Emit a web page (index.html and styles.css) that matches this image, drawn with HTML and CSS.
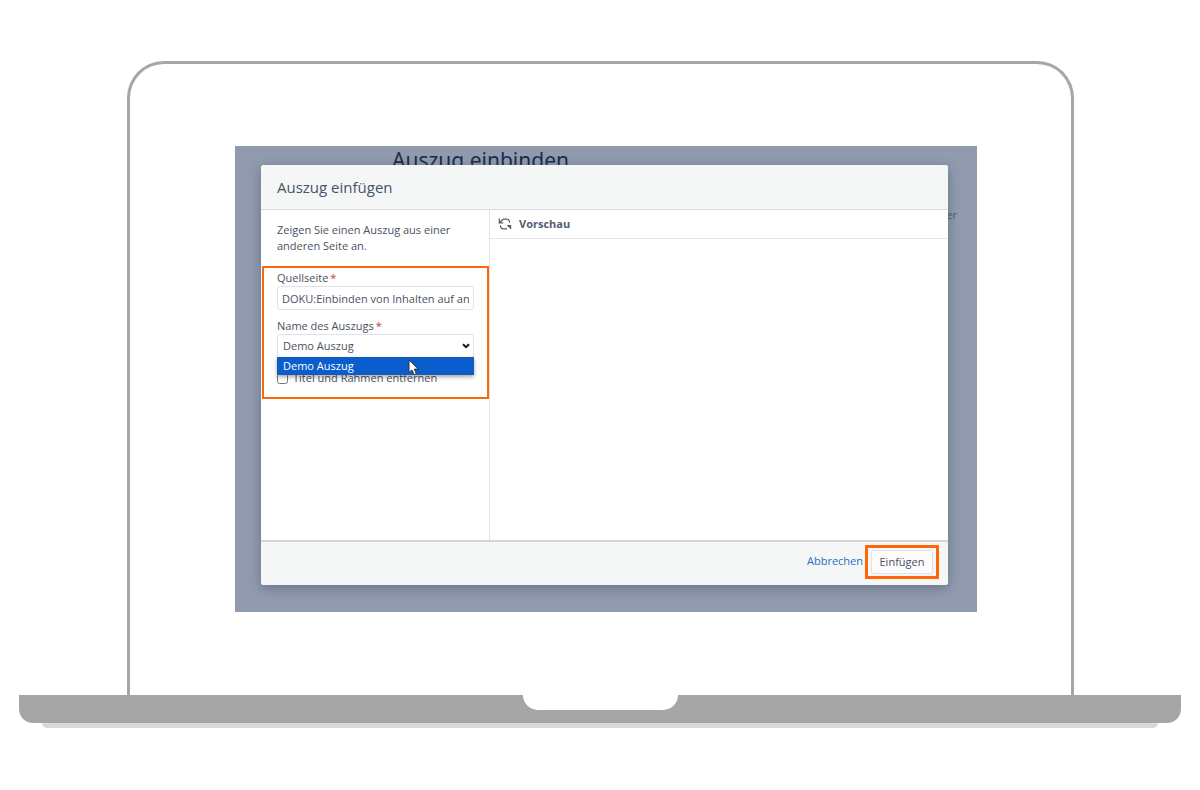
FILE: index.html
```
<!DOCTYPE html>
<html lang="de">
<head>
<meta charset="utf-8">
<title>Auszug einfügen</title>
<link rel="stylesheet" href="styles.css">
</head>
<body>
<div class="laptop">
  <div class="lid">
    <div class="screen">
      <h1 class="page-title">Auszug einbinden</h1>
      <p class="page-text">er</p>
      <div class="dialog" role="dialog" aria-labelledby="dialog-title">
        <header class="dialog-header"><h2 id="dialog-title">Auszug einfügen</h2></header>
        <div class="dialog-main">
          <form class="settings">
            <p class="intro">Zeigen Sie einen Auszug aus einer anderen Seite an.</p>
            <div class="fields">
              <label for="source">Quellseite<span class="required">*</span></label>
              <input class="control" id="source" type="text" value="DOKU:Einbinden von Inhalten auf anderen Seiten">
              <label for="name">Name des Auszugs<span class="required">*</span></label>
              <div class="select-wrap">
                <select class="control" id="name"><option>Demo Auszug</option></select>
                <svg class="chevron" viewBox="0 0 8 6"><path d="M1 1.2 4 4.2 7 1.2"/></svg>
                <div class="options">Demo Auszug</div>
                <svg class="cursor" viewBox="0 0 12 17"><path d="M1 1v12.5l3-2.6 2 4.8 2.3-1-2-4.6h4z"/></svg>
              </div>
              <div class="check">
                <input type="checkbox" id="plain">
                <label for="plain">Titel und Rahmen entfernen</label>
              </div>
            </div>
          </form>
          <section class="preview">
            <div class="preview-bar">
              <button class="refresh" type="button" aria-label="Aktualisieren">
                <svg viewBox="0 0 14 14"><path class="stroke" d="M5 2.2H8.6Q11.4 2.2 11.6 5.6M9 11.8H5.4Q2.6 11.8 2.4 8.4"/><path class="stroke" d="M1.3 1.6V5.8H5.2M1.6 5.5 5 2.2"/><path d="M13.2 12.6V8H8.6z"/></svg>
              </button>
              <h3>Vorschau</h3>
            </div>
          </section>
        </div>
        <footer class="dialog-footer">
          <a class="cancel" href="#">Abbrechen</a>
          <div class="marker"><button class="insert" type="button">Einfügen</button></div>
        </footer>
      </div>
    </div>
  </div>
  <div class="base"><div class="notch"></div></div>
  <div class="foot"></div>
</div>
</body>
</html>
```
FILE: styles.css
```
* { box-sizing: border-box; }
body {
  margin: 0;
  padding: 61px 19px 0;
  background: #fff;
  color: #4a5160;
  font: 11px/16px "Open Sans", "Noto Sans", sans-serif;
}
h1, h2, h3, p { margin: 0; font-weight: 400; }
button, input, select { font: inherit; color: inherit; }

.lid {
  margin: 0 107px 0 108px;
  padding: 82px 94px 83px 105px;
  border: 3px solid #a6a6a6;
  border-bottom: 0;
  border-radius: 37px 37px 0 0;
}
.screen {
  position: relative;
  overflow: hidden;
  min-height: 466px;
  background: #919bad;
}
.page-title {
  padding: 1px 0 0 157px;
  font-family: "Noto Sans", sans-serif;
  font-size: 21px;
  line-height: 26px;
  color: #1c2b4d;
}
.page-text {
  padding: 34px 20px 0 0;
  text-align: right;
  color: #4d5a75;
}

.dialog {
  position: absolute;
  inset: 19px 29px 27px 26px;
  display: flex;
  flex-direction: column;
  overflow: hidden;
  border-radius: 3px;
  background: #fff;
  box-shadow: 0 3px 12px rgba(40, 55, 85, .4);
}
.dialog-header {
  padding: 11px 16px;
  border-bottom: 1px solid #d9dcdf;
  background: #f5f7f7;
}
.dialog-header h2 { font-size: 15px; line-height: 22px; color: #48516a; }
.dialog-main { flex: 1; display: flex; }
.settings { width: 229px; border-right: 1px solid #e1e3e6; }
.intro { padding: 12px 24px 0 16px; }

.fields {
  display: flex;
  flex-direction: column;
  margin: 12px 0 0 1px;
  padding: 2px 13px 7px;
  border: 2px solid #ff6608;
}
.required { margin-left: 2px; color: #c9372c; }
.control {
  width: 100%;
  height: 24px;
  margin: 0 0 8px;
  padding: 0 4px;
  border: 1px solid #dfe2e6;
  border-radius: 3px;
  background: #fff;
}
.select-wrap { position: relative; }
.select-wrap .control { display: block; padding-left: 5px; appearance: none; }
.chevron {
  position: absolute;
  top: 9px;
  right: 4px;
  width: 8px;
  height: 6px;
  fill: none;
  stroke: #16181d;
  stroke-width: 2;
}
.options {
  position: absolute;
  top: 23px;
  left: 0;
  right: 0;
  padding: 0 5px;
  border: 1px solid #1d57b0;
  background: #0a5dcd;
  color: #fff;
  box-shadow: 0 2px 4px rgba(0, 0, 0, .35);
}
.cursor {
  position: absolute;
  top: 25px;
  right: 54px;
  width: 12px;
  height: 17px;
  fill: #fff;
  stroke: #30353f;
  stroke-width: 1;
}
.check { display: flex; align-items: center; gap: 5px; padding: 4px 0; }
.check input { width: 11px; height: 11px; margin: 0; }

.preview { flex: 1; }
.preview-bar {
  display: flex;
  align-items: center;
  gap: 7px;
  height: 29px;
  padding-left: 8px;
  border-bottom: 1px solid #e4e6e9;
}
.refresh { display: flex; padding: 0; border: 0; background: none; }
.refresh svg { width: 14px; height: 14px; fill: #555b66; }
.refresh .stroke { fill: none; stroke: #555b66; stroke-width: 1.2; }
.preview-bar h3 { font-size: 11px; line-height: 16px; font-weight: 700; color: #525d70; }

.dialog-footer {
  display: flex;
  align-items: flex-start;
  justify-content: flex-end;
  gap: 2px;
  height: 45px;
  padding: 3px 9px 0 0;
  border-top: 2px solid #d3d6d8;
  background: #f5f7f7;
}
.cancel { padding-top: 8px; color: #2270c0; text-decoration: none; }
.marker { padding: 2px 3px; border: 3px solid #ff6608; }
.insert {
  display: block;
  width: 62px;
  height: 24px;
  padding: 0;
  border: 1px solid #dfe2e6;
  border-radius: 3px;
  background: #fcfcfd;
}

.base {
  height: 28px;
  border-radius: 0 0 14px 14px;
  background: #a6a6a6;
}
.notch {
  width: 155px;
  height: 15px;
  margin: 0 auto;
  border-radius: 0 0 15px 15px;
  background: #fff;
}
.foot {
  height: 5px;
  margin: 0 23px;
  border-radius: 0 0 5px 5px;
  background: #d9d9d9;
}
```
